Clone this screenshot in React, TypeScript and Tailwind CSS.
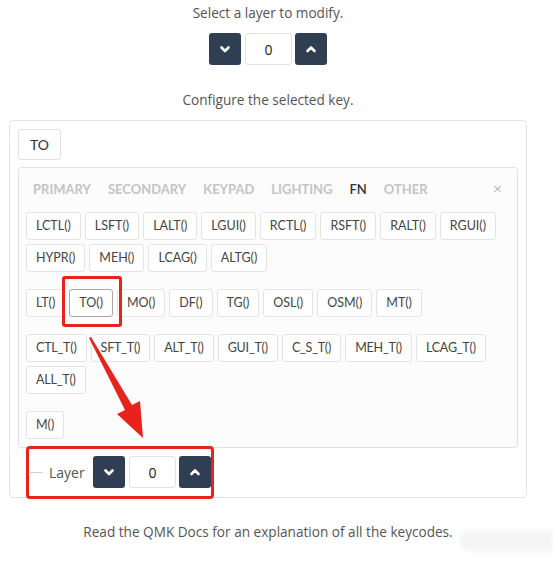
import React from "react";

const Chevron = ({ up }: { up?: boolean }) => (
  <svg width="12" height="12" viewBox="0 0 12 12" fill="none">
    <polyline
      points={up ? "2.5,8 6,4.5 9.5,8" : "2.5,4.5 6,8 9.5,4.5"}
      stroke="white"
      strokeWidth="2.6"
      strokeLinecap="round"
      strokeLinejoin="round"
    />
  </svg>
);

const Stepper = () => (
  <div className="flex items-center">
    <button className="w-[32px] h-[32px] rounded-[3px] bg-[#2f3e52] flex items-center justify-center">
      <Chevron />
    </button>
    <div className="ml-[4px] w-[47px] h-[32px] border border-[#e2e2e2] rounded-[3px] bg-white flex items-center justify-center text-[14px] text-[#222] font-['Open_Sans']">
      0
    </div>
    <button className="ml-[3px] w-[32px] h-[32px] rounded-[3px] bg-[#2f3e52] flex items-center justify-center">
      <Chevron up />
    </button>
  </div>
);

const Key = ({ label, selected, tight }: { label: string; selected?: boolean; tight?: boolean }) => (
  <div
    className={
      "h-[28px] px-[9px] flex items-center rounded-[3px] bg-white text-[12.5px] text-[#444] font-['Lato'] " +
      (tight ? "tracking-[-0.2px] " : "") +
      (selected ? "border border-[#a8a8a8]" : "border border-[#e4e4e4]")
    }
  >
    {label}
  </div>
);

const Group = ({ keys, selected, tight }: { keys: string[]; selected?: string; tight?: boolean }) => (
  <div className="flex flex-wrap gap-[4px]">
    {keys.map((k) => (
      <Key key={k} label={k} selected={k === selected} tight={tight} />
    ))}
  </div>
);

export default function App() {
  const tabs = ["PRIMARY", "SECONDARY", "KEYPAD", "LIGHTING", "FN", "OTHER"];
  return (
    <div className="w-[553px] h-[562px] bg-white relative overflow-hidden font-['Open_Sans'] text-[#555]">
      <div className="w-[536px]">
        <p className="pt-[4px] text-center text-[13.6px] leading-[18px]">Select a layer to modify.</p>
        <div className="mt-[11px] flex justify-center">
          <Stepper />
        </div>
        <p className="mt-[26px] text-center text-[13.6px] leading-[18px]">Configure the selected key.</p>
        <div className="mt-[11px] mx-[9px] border border-[#e3e3e3] rounded-[4px] p-[8px] h-[378px]">
          <div className="w-[43px] h-[31px] border border-[#e0e0e0] rounded-[3px] flex items-center justify-center text-[14px] text-[#333] font-['Lato']">
            TO
          </div>
          <div className="mt-[7px] border border-[#e2e2e2] rounded-[3px] bg-[#fcfcfc] h-[281px] px-[7px] relative">
            <div className="flex items-center h-[44px] pl-[7px] gap-[17px] font-['Lato'] font-bold text-[13px]">
              {tabs.map((t) => (
                <span key={t} className={t === "FN" ? "text-[#333] font-semibold" : "text-[#c4c4c4]"}>
                  {t}
                </span>
              ))}
            </div>
            <span className="absolute right-[14px] top-[11px] text-[13px] text-[#bbb] font-['DejaVu_Sans']">×</span>
            <div className="flex flex-col gap-[17px]">
              <Group keys={["LCTL()", "LSFT()", "LALT()", "LGUI()", "RCTL()", "RSFT()", "RALT()", "RGUI()", "HYPR()", "MEH()", "LCAG()", "ALTG()"]} />
              <Group keys={["LT()", "TO()", "MO()", "DF()", "TG()", "OSL()", "OSM()", "MT()"]} selected="TO()" />
              <Group tight keys={["CTL_T()", "SFT_T()", "ALT_T()", "GUI_T()", "C_S_T()", "MEH_T()", "LCAG_T()", "ALL_T()"]} />
              <Group keys={["M()"]} />
            </div>
          </div>
          <div className="mt-[8px] flex items-center h-[32px]">
            <div className="ml-[12px] w-[13px] h-px bg-[#d0d0d0]" />
            <span className="ml-[6px] text-[14px] text-[#555] w-[44px]">Layer</span>
            <Stepper />
          </div>
        </div>
        <p className="mt-[25px] text-center text-[13.6px] leading-[18px]">
          Read the QMK Docs for an explanation of all the keycodes.
        </p>
      </div>

      {/* annotations */}
      <div className="absolute left-[62px] top-[276px] w-[60px] h-[51px] border-[3px] border-[#e8231c] rounded-[3px]" />
      <div className="absolute left-[26px] top-[446px] w-[188px] h-[53px] border-[3px] border-[#e8231c] rounded-[4px]" />
      <svg className="absolute left-0 top-0" width="553" height="562" viewBox="0 0 553 562">
        <polygon points="89,338 91,337 132,405 140,401 143,438 117,414 125,410" fill="#e8231c" />
      </svg>
      <div className="absolute left-[460px] top-[530px] w-[93px] h-[22px] rounded-l-full bg-[#f5f5f5] blur-[2px]" />
    </div>
  );
}
